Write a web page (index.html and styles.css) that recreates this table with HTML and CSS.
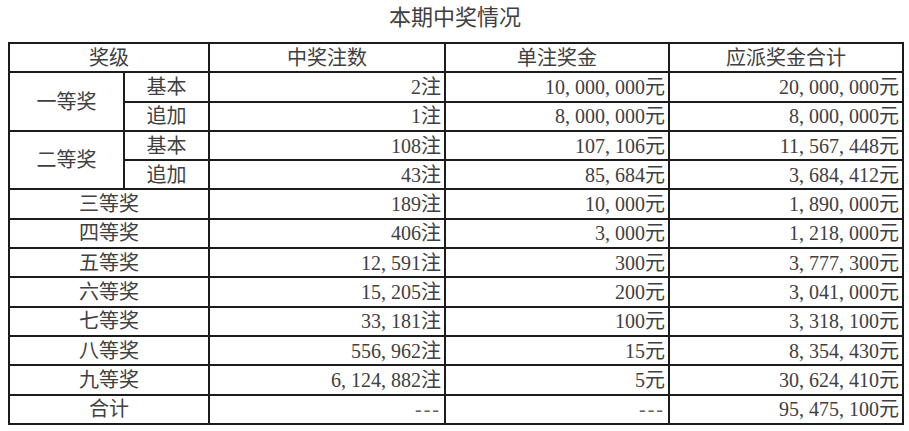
FILE: index.html
```html
<!DOCTYPE html>
<html lang="zh-CN">
<head>
<meta charset="utf-8">
<title>本期中奖情况</title>
<link rel="stylesheet" href="styles.css">
</head>
<body>
<div class="title">本期中奖情况</div>
<table class="prize">
  <colgroup>
    <col class="c1"><col class="c2"><col class="c3"><col class="c4"><col class="c5">
  </colgroup>
  <tr><td colspan="2" class="ctr">奖级</td><td class="ctr">中奖注数</td><td class="ctr">单注奖金</td><td class="ctr">应派奖金合计</td></tr>
  <tr><td rowspan="2" class="ctr">一等奖</td><td class="ctr">基本</td><td class="num">2注</td><td class="num">10<span class="cm">,</span>000<span class="cm">,</span>000元</td><td class="num">20<span class="cm">,</span>000<span class="cm">,</span>000元</td></tr>
  <tr><td class="ctr">追加</td><td class="num">1注</td><td class="num">8<span class="cm">,</span>000<span class="cm">,</span>000元</td><td class="num">8<span class="cm">,</span>000<span class="cm">,</span>000元</td></tr>
  <tr><td rowspan="2" class="ctr">二等奖</td><td class="ctr">基本</td><td class="num">108注</td><td class="num">107<span class="cm">,</span>106元</td><td class="num">11<span class="cm">,</span>567<span class="cm">,</span>448元</td></tr>
  <tr><td class="ctr">追加</td><td class="num">43注</td><td class="num">85<span class="cm">,</span>684元</td><td class="num">3<span class="cm">,</span>684<span class="cm">,</span>412元</td></tr>
  <tr><td colspan="2" class="ctr">三等奖</td><td class="num">189注</td><td class="num">10<span class="cm">,</span>000元</td><td class="num">1<span class="cm">,</span>890<span class="cm">,</span>000元</td></tr>
  <tr><td colspan="2" class="ctr">四等奖</td><td class="num">406注</td><td class="num">3<span class="cm">,</span>000元</td><td class="num">1<span class="cm">,</span>218<span class="cm">,</span>000元</td></tr>
  <tr><td colspan="2" class="ctr">五等奖</td><td class="num">12<span class="cm">,</span>591注</td><td class="num">300元</td><td class="num">3<span class="cm">,</span>777<span class="cm">,</span>300元</td></tr>
  <tr><td colspan="2" class="ctr">六等奖</td><td class="num">15<span class="cm">,</span>205注</td><td class="num">200元</td><td class="num">3<span class="cm">,</span>041<span class="cm">,</span>000元</td></tr>
  <tr><td colspan="2" class="ctr">七等奖</td><td class="num">33<span class="cm">,</span>181注</td><td class="num">100元</td><td class="num">3<span class="cm">,</span>318<span class="cm">,</span>100元</td></tr>
  <tr><td colspan="2" class="ctr">八等奖</td><td class="num">556<span class="cm">,</span>962注</td><td class="num">15元</td><td class="num">8<span class="cm">,</span>354<span class="cm">,</span>430元</td></tr>
  <tr><td colspan="2" class="ctr">九等奖</td><td class="num">6<span class="cm">,</span>124<span class="cm">,</span>882注</td><td class="num">5元</td><td class="num">30<span class="cm">,</span>624<span class="cm">,</span>410元</td></tr>
  <tr><td colspan="2" class="ctr">合计</td><td class="num"><span class="dash">---</span></td><td class="num"><span class="dash">---</span></td><td class="num">95<span class="cm">,</span>475<span class="cm">,</span>100元</td></tr>
</table>
</body>
</html>
```

FILE: styles.css
```css
html, body {
  margin: 0;
  padding: 0;
  background: #fff;
}
body {
  padding: 0 8px;
  font-family: "Liberation Serif", "Noto Sans CJK SC", serif;
  color: #404040;
}
.title {
  width: 894px;
  height: 42px;
  line-height: 36px;
  text-align: center;
  font-size: 22px;
}
.prize {
  border-collapse: collapse;
  table-layout: fixed;
  width: 894px;
  font-size: 20px;
}
.c1 { width: 115px; }
.c2 { width: 85px; }
.c3 { width: 236px; }
.c4 { width: 224px; }
.c5 { width: 234px; }
.prize tr {
  height: 29.3px;
}
.prize td {
  border: 2px solid #1c1c1c;
  padding: 0 3px 0 3px;
  line-height: 24px;
  white-space: nowrap;
  vertical-align: middle;
}
.ctr { text-align: center; }
.num { text-align: right; }
.cm { margin-right: 5px; }
.dash {
  letter-spacing: 2px;
  color: #666;
}
```
